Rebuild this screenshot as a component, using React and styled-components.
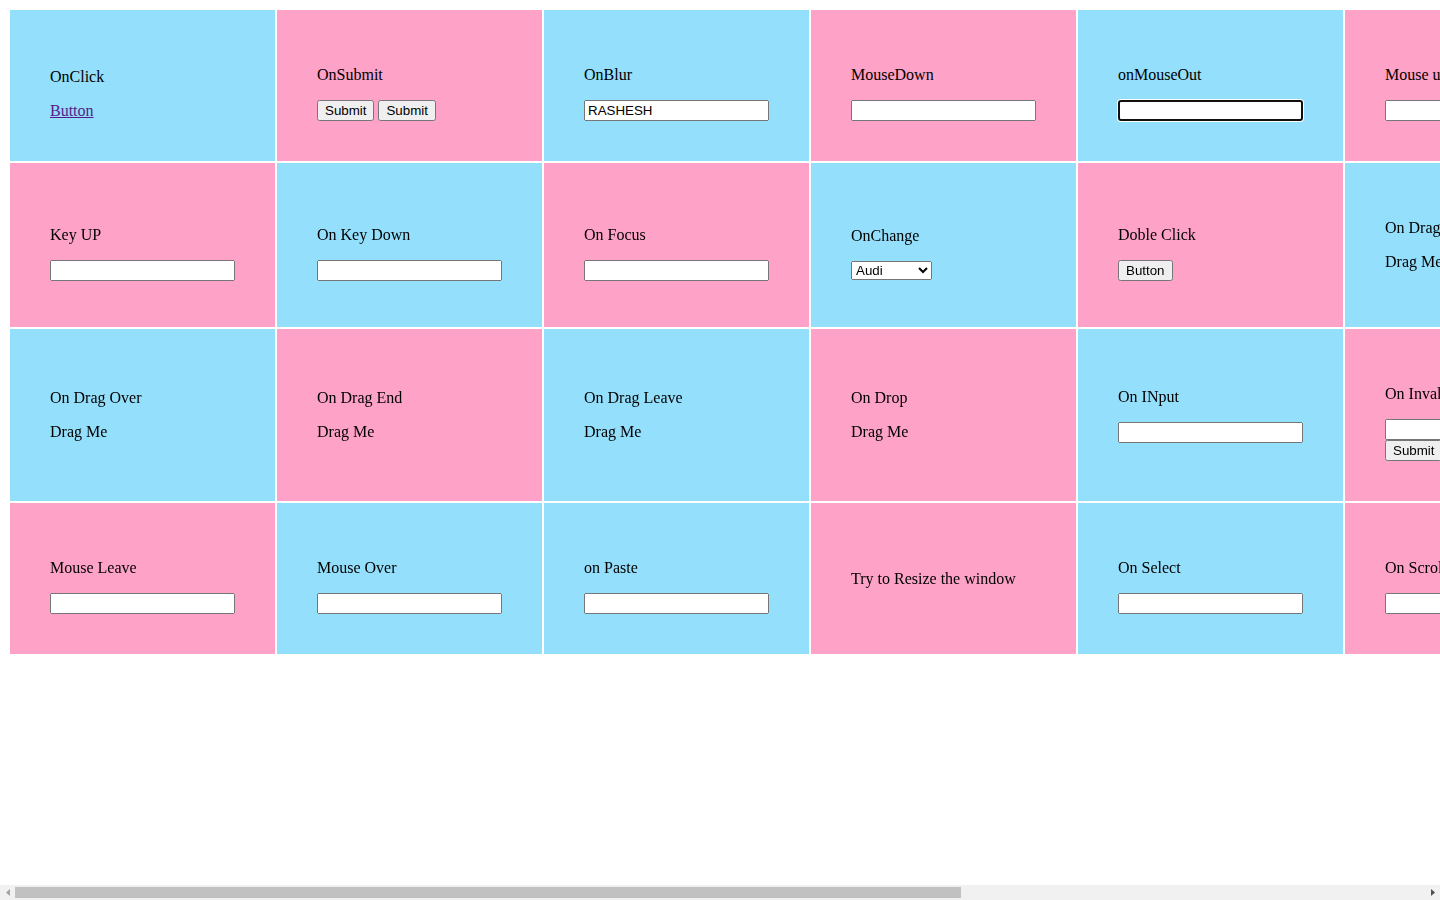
import React from "react";
import styled, { createGlobalStyle, css } from "styled-components";

const GlobalStyle = createGlobalStyle`
  html, body {
    margin: 0;
    padding: 0;
    background: #ffffff;
    overflow: hidden;
  }
  body {
    font-family: "Liberation Serif", "Times New Roman", serif;
    font-size: 16px;
    color: #000000;
  }
`;

const Page = styled.div`
  display: flex;
  flex-direction: column;
  width: 100vw;
  height: 100vh;
`;

const Viewport = styled.div`
  flex: 1;
  min-height: 0;
  box-sizing: border-box;
  padding: 8px;
  overflow-x: auto;
  overflow-y: hidden;
  scrollbar-width: none;
  &::-webkit-scrollbar {
    display: none;
  }
`;

const ScrollBar = styled.div`
  flex: none;
  display: flex;
  align-items: stretch;
  height: 15px;
  background: #f1f1f1;
`;

const ScrollButton = styled.div`
  flex: none;
  width: 15px;
  display: flex;
  align-items: center;
  justify-content: center;
`;

const ScrollTrack = styled.div`
  flex: 1;
  display: flex;
  align-items: center;
`;

const ScrollThumb = styled.div`
  height: 11px;
  background: #c1c1c1;
`;

const Board = styled.div`
  display: grid;
  grid-template-columns: repeat(8, 265px);
  gap: 2px;
  padding: 2px;
  width: max-content;
`;

const Cell = styled.div`
  display: flex;
  flex-direction: column;
  justify-content: center;
  padding: 40px;
  min-width: 0;
  background: ${(p) => (p.$tone === "pink" ? "#fea2c7" : "#94dffb")};
`;

const Stack = styled.div`
  display: block;
`;

const Label = styled.p`
  margin: 16px 0;
  white-space: nowrap;
`;

const DragText = styled.p`
  margin: 16px 0;
  white-space: nowrap;
  cursor: grab;
`;

const Output = styled.p`
  margin: 16px 0;
`;

const LinkText = styled.a`
  color: #551a8b;
  text-decoration: underline;
  cursor: pointer;
`;

const controlFont = css`
  font-family: "Liberation Sans", Arial, sans-serif;
  font-size: 13.333px;
`;

const Field = styled.input`
  ${controlFont}
  display: block;
  box-sizing: border-box;
  width: 185px;
  height: 21px;
  margin: 0;
  ${(p) =>
    p.$focused &&
    css`
      border: 2px solid #101010;
      border-radius: 3px;
      background: #ffffff;
      outline: none;
      box-shadow: 0 0 0 1px #ffffff;
      padding: 0 2px;
    `}
`;

const ButtonRow = styled.div`
  display: flex;
  gap: 4px;
`;

const Btn = styled.button`
  ${controlFont}
  display: block;
  margin: 0;
  height: 21px;
  padding: 1px 6px;
`;

const Picker = styled.select`
  ${controlFont}
  display: block;
  width: 81px;
  margin: 0;
`;

const cells = [
  // row 1
  { tone: "blue", label: "OnClick", kind: "link" },
  { tone: "pink", label: "OnSubmit", kind: "submit2" },
  { tone: "blue", label: "OnBlur", kind: "input", value: "RASHESH" },
  { tone: "pink", label: "MouseDown", kind: "input" },
  { tone: "blue", label: "onMouseOut", kind: "focused" },
  { tone: "pink", label: "Mouse up", kind: "input" },
  { tone: "blue", label: "Mouse Enter", kind: "input" },
  { tone: "pink", label: "Mouse Move", kind: "input" },
  // row 2
  { tone: "pink", label: "Key UP", kind: "input" },
  { tone: "blue", label: "On Key Down", kind: "input" },
  { tone: "pink", label: "On Focus", kind: "input" },
  { tone: "blue", label: "OnChange", kind: "select" },
  { tone: "pink", label: "Doble Click", kind: "button" },
  { tone: "blue", label: "On Drag", kind: "drag" },
  { tone: "pink", label: "On Drag Start", kind: "drag" },
  { tone: "blue", label: "On Drag Enter", kind: "drag" },
  // row 3
  { tone: "blue", label: "On Drag Over", kind: "drag" },
  { tone: "pink", label: "On Drag End", kind: "drag" },
  { tone: "blue", label: "On Drag Leave", kind: "drag" },
  { tone: "pink", label: "On Drop", kind: "drag" },
  { tone: "blue", label: "On INput", kind: "inputOut" },
  { tone: "pink", label: "On Invalid", kind: "invalid" },
  { tone: "blue", label: "On Reset", kind: "input" },
  { tone: "pink", label: "On Key Press", kind: "input" },
  // row 4
  { tone: "pink", label: "Mouse Leave", kind: "input" },
  { tone: "blue", label: "Mouse Over", kind: "input" },
  { tone: "blue", label: "on Paste", kind: "input" },
  { tone: "pink", label: "Try to Resize the window", kind: "text" },
  { tone: "blue", label: "On Select", kind: "input" },
  { tone: "pink", label: "On Scroll", kind: "input" },
  { tone: "blue", label: "On Copy", kind: "input" },
  { tone: "pink", label: "On Cut", kind: "input" },
];

function Body({ cell }) {
  switch (cell.kind) {
    case "link":
      return <LinkText>Button</LinkText>;
    case "submit2":
      return (
        <ButtonRow>
          <Btn type="button">Submit</Btn>
          <Btn type="button">Submit</Btn>
        </ButtonRow>
      );
    case "input":
      return <Field type="text" defaultValue={cell.value || ""} />;
    case "focused":
      return <Field type="text" $focused autoFocus defaultValue="" />;
    case "inputOut":
      return (
        <>
          <Field type="text" defaultValue="" />
          <Output />
        </>
      );
    case "select":
      return (
        <Picker defaultValue="audi">
          <option value="audi">Audi</option>
          <option value="bmw">BMW</option>
          <option value="volvo">Volvo</option>
          <option value="mercedes">Mercedes</option>
        </Picker>
      );
    case "button":
      return <Btn type="button">Button</Btn>;
    case "drag":
      return <DragText draggable>Drag Me</DragText>;
    case "invalid":
      return (
        <>
          <Field type="text" required defaultValue="" />
          <Btn type="button">Submit</Btn>
        </>
      );
    default:
      return null;
  }
}

export default function App() {
  return (
    <>
      <GlobalStyle />
      <Page>
        <Viewport>
          <Board>
            {cells.map((cell, i) => (
              <Cell key={i} $tone={cell.tone}>
                <Stack>
                  <Label>{cell.label}</Label>
                  <Body cell={cell} />
                </Stack>
              </Cell>
            ))}
          </Board>
        </Viewport>
        <ScrollBar>
          <ScrollButton>
            <svg width="4" height="7" viewBox="0 0 4 7">
              <polygon points="4,0 0,3.5 4,7" fill="#a3a3a3" />
            </svg>
          </ScrollButton>
          <ScrollTrack>
            <ScrollThumb style={{ width: `${(946 / 1410) * 100}%` }} />
          </ScrollTrack>
          <ScrollButton>
            <svg width="4" height="7" viewBox="0 0 4 7">
              <polygon points="0,0 4,3.5 0,7" fill="#505050" />
            </svg>
          </ScrollButton>
        </ScrollBar>
      </Page>
    </>
  );
}
